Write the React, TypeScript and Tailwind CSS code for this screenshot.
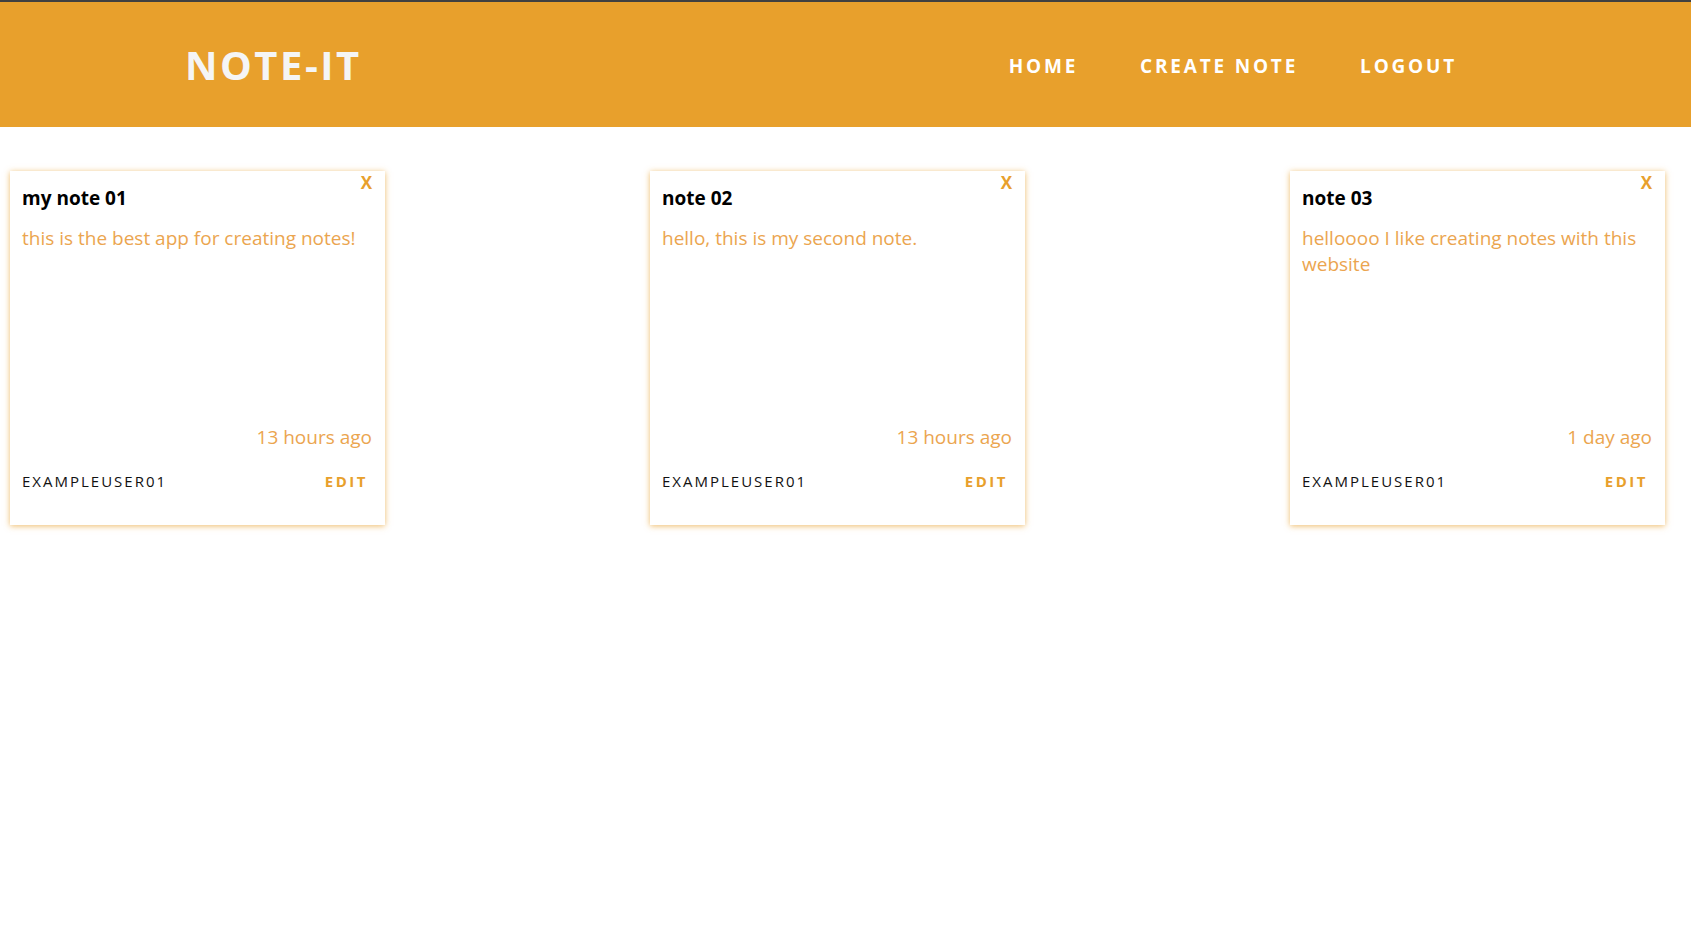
const notes = [
  { id: 1, title: 'my note 01', content: 'this is the best app for creating notes!', time: '13 hours ago', author: 'EXAMPLEUSER01' },
  { id: 2, title: 'note 02', content: 'hello, this is my second note.', time: '13 hours ago', author: 'EXAMPLEUSER01' },
  { id: 3, title: 'note 03', content: 'helloooo I like creating notes with this website', time: '1 day ago', author: 'EXAMPLEUSER01' },
]

function Note({ note }: { note: (typeof notes)[number] }) {
  return (
    <div className="relative w-[375px] h-[354px] flex flex-col bg-white pt-[15px] pl-[12px] pr-[13px] pb-[34px] shadow-[0_1px_6px_rgba(232,160,44,0.7)]">
      <button className="absolute top-[3px] right-[13px] text-[17px] leading-[17px] font-bold text-[#e8a02c]">X</button>
      <h2 className="text-[19px] leading-[24px] font-bold text-black">{note.title}</h2>
      <p className="mt-[15px] flex-1 text-[19px] leading-[26px] text-[#eba54f]">{note.content}</p>
      <p className="text-right text-[19px] leading-[27px] text-[#eba54f]">{note.time}</p>
      <div className="mt-[20px] flex items-center justify-between">
        <span className="text-[15px] leading-[20px] tracking-[2px] text-[#111]">{note.author}</span>
        <button className="mr-[4px] text-[15px] leading-[20px] font-bold tracking-[2.5px] text-[#e8a02c]">EDIT</button>
      </div>
    </div>
  )
}

export default function App() {
  return (
    <div className="min-h-[931px] bg-white font-['Open_Sans',sans-serif]">
      <div className="h-[2px] bg-[#404040]" />
      {/* Header */}
      <header className="h-[125px] bg-[#e8a02c] flex items-center pt-[4px] pl-[185px] pr-[234px]">
        <h1 className="-mt-[4px] text-[40px] leading-none font-bold tracking-[2.5px] text-[#f5f5f5]">NOTE-IT</h1>
        <nav className="ml-auto flex items-center gap-[62px]">
          {['HOME', 'CREATE NOTE', 'LOGOUT'].map(item => (
            <a key={item} className="text-[19px] leading-none font-bold tracking-[2.8px] text-white cursor-pointer">
              {item}
            </a>
          ))}
        </nav>
      </header>

      {/* Notes */}
      <main className="flex gap-[265px] pl-[10px] pt-[44px]">
        {notes.map(note => (
          <Note key={note.id} note={note} />
        ))}
      </main>
    </div>
  )
}
